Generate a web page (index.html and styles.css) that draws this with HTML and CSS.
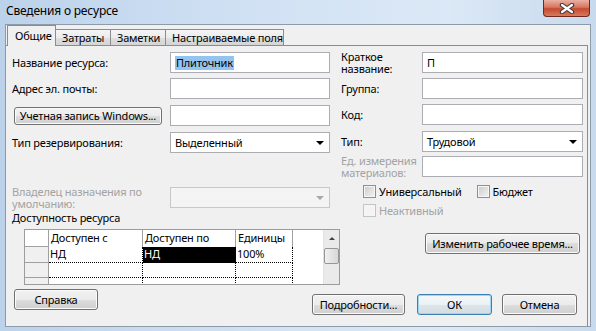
FILE: index.html
```html
<!DOCTYPE html>
<html lang="ru">
<head>
  <meta charset="UTF-8">
  <title>Сведения о ресурсе</title>
  <link rel="stylesheet" href="styles.css">
</head>
<body>

  <div class="window">
    <div class="titlebar">
      <span class="title">Сведения о ресурсе</span>
      <div class="close">
        <svg width="16" height="11" viewBox="0 0 16 11">
          <path d="M3 2 L13 9 M13 2 L3 9" stroke="#3b3b3b" stroke-width="4.4" stroke-linecap="round"/>
          <path d="M3 2 L13 9 M13 2 L3 9" stroke="#fff" stroke-width="2.2" stroke-linecap="round"/>
        </svg>
      </div>
    </div>

    <div class="client">
      <div class="tabs">
        <div class="tab active">Общие</div>
        <div class="tab w55">Затраты</div>
        <div class="tab w55">Заметки</div>
        <div class="tab w118">Настраиваемые поля</div>
      </div>

      <div class="panel">
        <div class="form">
          <!-- левая колонка -->
          <div class="col left">
            <div class="row">
              <label>Название ресурса:</label>
              <div class="field"><span class="sel">Плиточник</span></div>
            </div>
            <div class="row r2">
              <label>Адрес эл. почты:</label>
              <div class="field"></div>
            </div>
            <div class="row r3">
              <div class="label-btn"><button class="btn win">Учетная запись Windows...</button></div>
              <div class="field"></div>
            </div>
            <div class="row r3">
              <label>Тип резервирования:</label>
              <div class="field combo"><span>Выделенный</span><i class="arrow"></i></div>
            </div>
            <div class="row owner">
              <label class="dis two">Владелец назначения по<br>умолчанию:</label>
              <div class="field combo off"><i class="arrow"></i></div>
            </div>
            <div class="heading">Доступность ресурса</div>

            <div class="grid">
              <div class="rh top"></div>
              <div class="hd">Доступен с</div>
              <div class="hd">Доступен по</div>
              <div class="hd">Единицы</div>
              <div class="blank"></div>
              <div class="scroll">
                <div class="sb-up"><i></i></div>
                <div class="sb-thumb"></div>
              </div>

              <div class="rh"></div>
              <div class="cell">НД</div>
              <div class="cell cur">НД</div>
              <div class="cell">100%</div>

              <div class="rh"></div>
              <div class="cell"></div>
              <div class="cell"></div>
              <div class="cell"></div>

              <div class="rh"></div>
              <div class="cell"></div>
              <div class="cell"></div>
              <div class="cell"></div>
            </div>
          </div>

          <!-- правая колонка -->
          <div class="col right">
            <div class="row">
              <label class="two">Краткое<br>название:</label>
              <div class="field">П</div>
            </div>
            <div class="row r2">
              <label>Группа:</label>
              <div class="field"></div>
            </div>
            <div class="row r2">
              <label>Код:</label>
              <div class="field"></div>
            </div>
            <div class="row r3">
              <label>Тип:</label>
              <div class="field combo"><span>Трудовой</span><i class="arrow"></i></div>
            </div>
            <div class="row r4">
              <label class="dis two">Ед. измерения<br>материалов:</label>
              <div class="field"></div>
            </div>
            <div class="checks">
              <div class="check"><i class="cb"></i>Универсальный</div>
              <div class="check budget"><i class="cb"></i>Бюджет</div>
            </div>
            <div class="checks inactive">
              <div class="check dis"><i class="cb"></i>Неактивный</div>
            </div>
            <button class="btn worktime">Изменить рабочее время...</button>
          </div>
        </div>

        <div class="buttons">
          <button class="btn help">Справка</button>
          <button class="btn details">Подробности...</button>
          <button class="btn ok">ОК</button>
          <button class="btn cancel">Отмена</button>
        </div>
      </div>
    </div>
  </div>

</body>
</html>
```

FILE: styles.css
```css
* { box-sizing: border-box; margin: 0; padding: 0; }
body {
  width: 596px; height: 331px; overflow: hidden;
  font-family: "Noto Sans", sans-serif; font-size: 11px; letter-spacing: -0.2px; color: #000;
  background: #c9dcf0;
}

/* Окно */
.window {
  height: 331px; display: flex; flex-direction: column;
  background: linear-gradient(to right, #bcd2ea 0%, #d2e2f4 45%, #dbe8f6 75%, #c8daee 100%);
}
.titlebar { height: 24px; display: flex; justify-content: space-between; align-items: flex-start; }
.title { padding: 3px 0 0 6px; line-height: 16px; font-size: 12px; }
.close {
  width: 47px; height: 17px; margin-right: 6px;
  border: 1px solid #6e2a20; border-top: none; border-radius: 0 0 4px 4px;
  background: linear-gradient(#eab1a3, #d8765f 45%, #c54a30 55%, #d87a5c);
  display: flex; align-items: center; justify-content: center;
}

.client {
  flex: 1; margin: 0 5px 4px 5px; background: #f0f0f0;
  border: 1px solid #8d9aa9; display: flex; flex-direction: column;
}

/* Вкладки */
.tabs { height: 21px; display: flex; align-items: flex-end; padding-left: 1px; }
.tab {
  height: 17px; border: 1px solid #898c95; border-bottom: none; border-left: none;
  background: linear-gradient(#f4f4f4, #ebebeb 50%, #dedede 50%, #d3d3d3);
  padding-left: 6px; line-height: 15px; white-space: nowrap;
}
.tab.active {
  width: 49px; height: 21px; border-left: 1px solid #898c95; background: #f0f0f0;
  padding-left: 7px; line-height: 19px; position: relative; z-index: 1;
}
.w55 { width: 55px; }
.w118 { width: 118px; }

.panel {
  flex: 1; margin: -1px 2px 0 0; border-top: 1px solid #898c95; border-right: 1px solid #898c95;
  display: flex; flex-direction: column;
}

/* Форма */
.form { display: flex; gap: 11px; padding: 6px 0 0 6px; }
.col { display: flex; flex-direction: column; }
.left { width: 318px; }
.right { width: 242px; }

.row { display: flex; align-items: center; height: 21px; }
.row label { flex: none; width: 158px; white-space: nowrap; }
.right .row label { width: 81px; }
.row label.two { line-height: 12px; }
.r2 { margin-top: 5px; }
.r3 { margin-top: 6px; }
.r4 { margin-top: 4px; }
.owner { margin-top: 34px; }
.dis { color: #a3a3a3; }

.field {
  flex: none; width: 160px; height: 21px; border: 1px solid #abadb3; background: #fff;
  padding-left: 4px; line-height: 19px; display: flex; align-items: center;
}
.right .field { width: 161px; }
.sel { background: #94c3ef; line-height: 14px; padding: 0 1px; }
.combo .arrow {
  margin-left: auto; margin-right: 5px; width: 0; height: 0;
  border-left: 4px solid transparent; border-right: 4px solid transparent; border-top: 4px solid #000;
}
.combo.off { border-color: #c8c8c8; background: #f4f4f4; }
.combo.off .arrow { border-top-color: #a8a8a8; }

.label-btn { width: 158px; flex: none; padding-left: 2px; }

.heading { margin-top: 3px; line-height: 14px; }

/* Кнопки */
.btn {
  font-family: inherit; font-size: 11px; letter-spacing: -0.2px; color: #000;
  height: 21px; border: 1px solid #707070; border-radius: 3px;
  background: linear-gradient(#f2f2f2, #ebebeb 50%, #dddddd 50%, #cfcfcf);
  box-shadow: inset 0 0 0 1px #fbfbfb; white-space: nowrap;
}
.btn.win { width: 148px; height: 18px; line-height: 14px; }
.worktime { width: 155px; margin: 16px 0 0 84px; }

.buttons { display: flex; align-items: flex-start; padding: 4px 0 0 8px; }
.help { width: 84px; }
.details { width: 93px; margin: 5px 0 0 214px; }
.ok {
  width: 75px; margin: 5px 0 0 12px; border-color: #3c7fb1;
  box-shadow: inset 0 0 0 1px #9fd5f3;
  background: linear-gradient(#f4f8fa, #ecf1f4 50%, #dde5ea 50%, #d3dde3);
}
.cancel { width: 75px; margin: 5px 0 0 10px; }

/* Чекбоксы */
.checks { display: flex; padding-left: 22px; margin-top: 8px; height: 13px; align-items: center; }
.inactive { margin-top: 6px; }
.check { display: flex; align-items: center; gap: 3px; }
.budget { margin-left: 15px; }
.cb {
  width: 13px; height: 13px; border: 1px solid #8e8f8f;
  background: linear-gradient(135deg, #cbcbcb, #f4f4f4);
  box-shadow: inset 0 0 0 1px #f6f6f6;
}
.check.dis .cb { border-color: #c4c4c4; background: #f4f4f4; }

/* Таблица доступности */
.grid {
  margin: 4px 0 0 12px; width: 316px; height: 56px; overflow: hidden;
  border: 1px solid #9c9c9c; background: #fff;
  display: grid; grid-template-columns: 24px 94px 93px 57px 30px 16px;
  grid-template-rows: 17px 16px 15px 15px;
}
.rh { background: #f0f0f0; border-right: 1px solid #a0a0a0; border-bottom: 1px solid #a0a0a0; }
.rh.top { background: #fff; }
.hd { border-right: 1px solid #a0a0a0; padding-left: 2px; line-height: 16px; }
.blank { grid-row: 1 / 5; grid-column: 5; background: #fff; }
.cell {
  border-right: 1px dotted #000; border-bottom: 1px dotted #000;
  padding-left: 1px; line-height: 14px;
}
.cell.cur { background: #000; color: #fff; }
.scroll {
  grid-row: 1 / 5; grid-column: 6; background: #eaeaea;
  border-left: 1px solid #e2e2e2; display: flex; flex-direction: column;
}
.sb-up { height: 17px; display: flex; align-items: center; justify-content: center; }
.sb-up i {
  width: 0; height: 0; border-left: 3px solid transparent; border-right: 3px solid transparent;
  border-bottom: 3px solid #404040;
}
.sb-thumb {
  margin: 1px 0 0 0; height: 16px; border: 1px solid #979797; border-radius: 2px;
  background: linear-gradient(to right, #f0f0f0, #d8d8d8);
}
```
